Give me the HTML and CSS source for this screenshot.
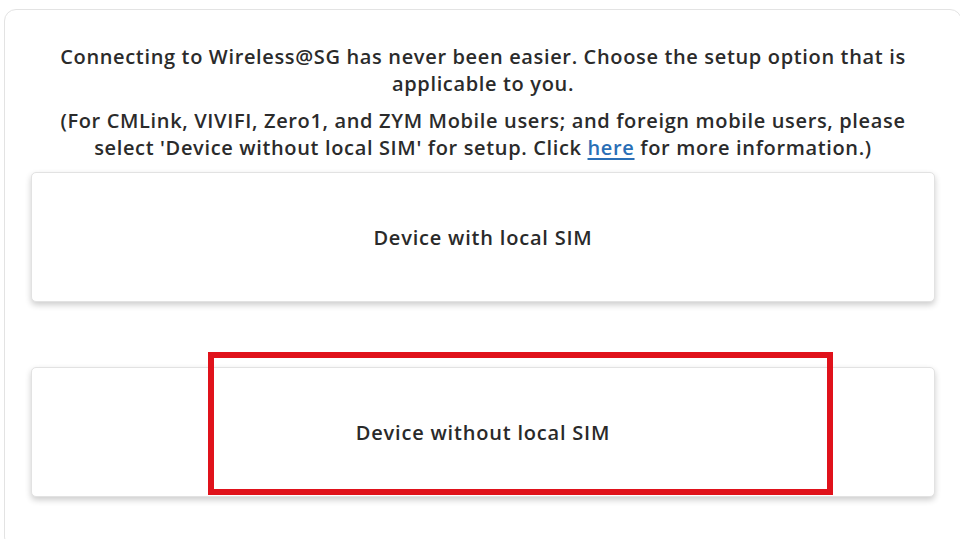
FILE: index.html
```html
<!DOCTYPE html>
<html lang="en">
<head>
<meta charset="utf-8">
<title>Wireless@SG setup</title>
<link rel="stylesheet" href="styles.css">
</head>
<body>
<div class="panel">
  <div class="intro">
    <p>Connecting to Wireless@SG has never been easier. Choose the setup option that is applicable to you.</p>
    <p>(For CMLink, VIVIFI, Zero1, and ZYM Mobile users; and foreign mobile users, please select 'Device without local SIM' for setup. Click <a href="#">here</a> for more information.)</p>
  </div>
  <div class="options">
    <button class="option">Device with local SIM</button>
    <button class="option">Device without local SIM</button>
  </div>
</div>
<div class="highlight"></div>
</body>
</html>
```
FILE: styles.css
```css
html, body {
  margin: 0;
  padding: 0;
  background: #ffffff;
  overflow: hidden;
}
body {
  font-family: "Open Sans", "Lato", sans-serif;
  color: #2a2a2a;
  position: relative;
  height: 539px;
}
.panel {
  margin: 9px 0 0 4px;
  width: 958px;
  height: 540px;
  border: 1px solid #e3e3e3;
  border-radius: 12px;
  box-sizing: border-box;
  padding: 33px 26px 0 26px;
}
.intro {
  text-align: center;
  font-size: 20px;
  font-weight: 600;
  letter-spacing: 0.65px;
  line-height: 27px;
  color: #2b2b2b;
  padding: 0 8px;
}
.intro p {
  margin: 0 0 10px 0;
}
.intro p:last-child {
  margin-bottom: 0;
}
.intro a {
  color: #2a6fb6;
  text-decoration: underline;
  text-decoration-thickness: 2px;
  text-underline-offset: 3px;
}
.options {
  display: flex;
  flex-direction: column;
  gap: 65px;
  margin-top: 11px;
}
.option {
  display: flex;
  align-items: center;
  justify-content: center;
  height: 130px;
  width: 100%;
  background: #ffffff;
  border: 1px solid #e2e2e2;
  border-radius: 5px;
  box-shadow: 0 3px 6px rgba(0, 0, 0, 0.2);
  font-family: "Open Sans", "Lato", sans-serif;
  font-size: 20px;
  font-weight: 600;
  letter-spacing: 0.8px;
  color: #2a2a2a;
  padding: 0;
}
.highlight {
  position: absolute;
  left: 208px;
  top: 352px;
  width: 625px;
  height: 143px;
  box-sizing: border-box;
  border: 6px solid #e0121b;
}
```
